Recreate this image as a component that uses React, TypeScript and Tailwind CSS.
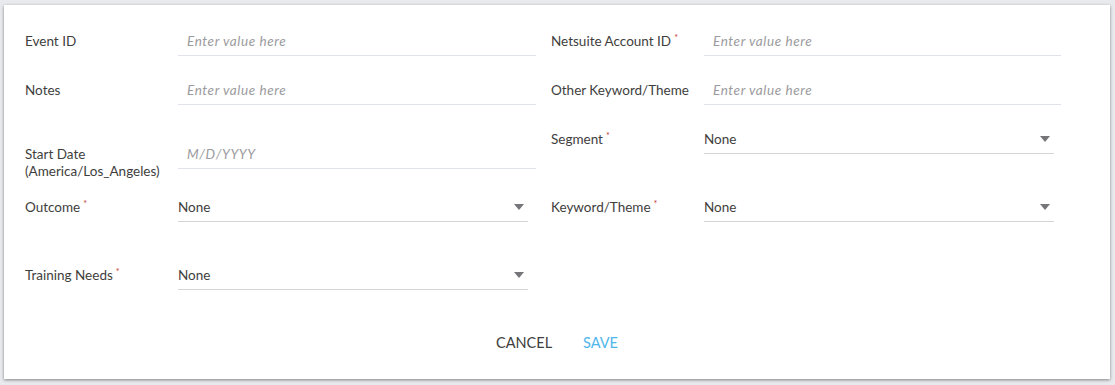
import React from "react";

type FieldProps = {
  label: React.ReactNode;
  required?: boolean;
  className?: string;
};

const Label = ({ label, required }: FieldProps) => (
  <div className="w-[153px] shrink-0 pt-[6px] text-[13.5px] leading-[17px] text-[#3e3e3c]">
    {label}
    {required && (
      <span className="relative -top-[5px] ml-[3px] text-[9px] text-[#c23934]">*</span>
    )}
  </div>
);

const TextField = ({
  label,
  required,
  placeholder = "Enter value here",
  className = "",
}: FieldProps & { placeholder?: string }) => (
  <div className={`flex items-start ${className}`}>
    <Label label={label} required={required} />
    <div className="flex h-[29px] flex-1 items-center border-b border-[#e1e3ea] pl-[9px]">
      <span className="text-[13.5px] italic tracking-[0.6px] text-[#9b9b9e]">{placeholder}</span>
    </div>
  </div>
);

const SelectField = ({ label, required, className = "" }: FieldProps) => (
  <div className={`flex items-start ${className}`}>
    <Label label={label} required={required} />
    <div className="flex h-[29px] w-[350px] items-center justify-between border-b border-[#d4d5d9] pr-[4px]">
      <span className="text-[13.5px] text-[#3e3e3c]">None</span>
      <svg width="10" height="6" viewBox="0 0 10 6">
        <path d="M0 0h10L5 6z" fill="#76767a" />
      </svg>
    </div>
  </div>
);

export default function App() {
  return (
    <div
      className="h-[385px] w-[1115px] bg-[#e9eaee] pl-[4px] pt-[5px]"
      style={{ fontFamily: "Lato, 'Open Sans', sans-serif" }}
    >
      <div className="flex h-[374px] w-[1106px] flex-col bg-white pl-[21px] pt-[22px] shadow-[0_1px_3px_rgba(0,0,0,0.45)]">
        <div className="flex gap-[15px]">
          <div className="flex w-[511px] flex-col">
            <TextField label="Event ID" />
            <TextField label="Notes" className="mt-[20px]" />
            <TextField
              label={
                <>
                  Start Date
                  <br />
                  (America/Los_Angeles)
                </>
              }
              placeholder="M/D/YYYY"
              className="mt-[35px]"
            />
            <SelectField label="Outcome" required className="mt-[13px]" />
            <SelectField label="Training Needs" required className="mt-[39px]" />
          </div>
          <div className="flex w-[510px] flex-col">
            <TextField label="Netsuite Account ID" required />
            <TextField label="Other Keyword/Theme" className="mt-[20px]" />
            <SelectField label="Segment" required className="mt-[20px]" />
            <SelectField label="Keyword/Theme" required className="mt-[39px]" />
          </div>
        </div>
        <div className="mt-[42px] flex justify-center gap-[31px] pr-[21px] text-[14.5px]">
          <button className="text-[#3e3e3c]">CANCEL</button>
          <button className="text-[#4fb6ea]">SAVE</button>
        </div>
      </div>
    </div>
  );
}
